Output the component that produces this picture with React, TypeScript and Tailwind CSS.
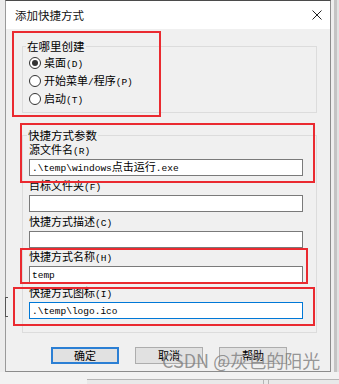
import React from "react";

const Mixed = ({ text }: { text: string }) => {
  const parts = text.split(/([\x00-\x7f]+)/).filter((p) => p.length > 0);
  return (
    <>
      {parts.map((p, i) =>
        /^[\x00-\x7f]+$/.test(p) ? (
          <span key={i} className="font-['Liberation_Mono',monospace] text-[9.5px]">
            {p}
          </span>
        ) : (
          <span key={i}>{p}</span>
        )
      )}
    </>
  );
};

const Radio = ({ checked, label }: { checked?: boolean; label: string }) => (
  <div className="h-[18px] flex items-center">
    <div className="ml-[3px] w-[12px] h-[12px] rounded-full border border-[#333333] bg-white flex items-center justify-center">
      {checked && <div className="w-[6px] h-[6px] rounded-full bg-[#333333]" />}
    </div>
    <div className="ml-[3px] leading-[14px]">
      <Mixed text={label} />
    </div>
  </div>
);

const Field = ({
  label,
  value,
  focused,
  first,
  short,
}: {
  label: string;
  value?: string;
  focused?: boolean;
  first?: boolean;
  short?: boolean;
}) => (
  <>
    <div className={`${first || short ? "h-[18px]" : "h-[19px]"} flex items-end ml-[2px]`}>
      <div className="leading-[14px]">
        <Mixed text={label} />
      </div>
    </div>
    <div
      className={`ml-[2px] w-[274px] h-[17px] bg-white border flex items-center pl-[2px] ${
        focused ? "border-[#0078d7]" : "border-[#7a7a7a]"
      }`}
    >
      <div className="leading-[13px] whitespace-nowrap">{value ? <Mixed text={value} /> : null}</div>
    </div>
  </>
);

export default function App() {
  return (
    <div className="relative w-[339px] h-[384px] overflow-hidden bg-[#e6e6e6] flex flex-col text-[11px] text-black font-['Noto_Sans_CJK_SC',sans-serif]">
      <div className="flex">
        <div className="w-[5px] bg-[#ececec]" />
        <div className="w-[326px] h-[372px] flex flex-col border-t border-t-[#4b4b4b] border-l border-r border-b border-l-[#9a9a9a] border-r-[#8c8c8c] border-b-[#8c8c8c]">
          <div className="h-[28px] bg-white flex items-center justify-between pl-[9px] pr-[7px]">
            <div className="text-[11.5px] leading-[14px] text-[#111]">添加快捷方式</div>
            <svg width="10" height="10" viewBox="0 0 10 10" className="mr-[1px]">
              <path d="M0.5 0.5 L9.5 9.5 M9.5 0.5 L0.5 9.5" stroke="#222" strokeWidth="1" fill="none" />
            </svg>
          </div>
          <div className="flex-1 bg-[#f0f0f0] flex flex-col">
            <fieldset className="mt-[10px] ml-[16px] w-[295px] border border-[#dcdcdc] pl-[3px] pt-[1px] pb-[4px]">
              <legend className="px-[1px] leading-[14px] text-[11.5px]">在哪里创建</legend>
              <Radio checked label="桌面(D)" />
              <Radio label="开始菜单/程序(P)" />
              <Radio label="启动(T)" />
            </fieldset>
            <fieldset className="mt-[16px] ml-[16px] w-[295px] border border-[#dcdcdc] pl-[4px] pb-[13px]">
              <legend className="px-[1px] leading-[12px] text-[11.5px]">快捷方式参数</legend>
              <Field first label="源文件名(R)" value=".\temp\windows点击运行.exe" />
              <Field label="目标文件夹(F)" />
              <Field label="快捷方式描述(C)" />
              <Field short label="快捷方式名称(H)" value="temp" />
              <Field label="快捷方式图标(I)" value=".\temp\logo.ico" focused />
            </fieldset>
            <div className="mt-[14px] ml-[45px] flex gap-[16px]">
              <div className="w-[68px] h-[17px] border-2 border-[#2b7fd4] bg-[#e1e1e1] flex items-center justify-center leading-[13px]">
                确定
              </div>
              <div className="w-[68px] h-[17px] border border-[#adadad] bg-[#e1e1e1] flex items-center justify-center leading-[13px]">
                取消
              </div>
              <div className="w-[68px] h-[17px] border border-[#adadad] bg-[#e1e1e1] flex items-center justify-center leading-[13px]">
                帮助
              </div>
            </div>
          </div>
        </div>
        <div className="flex-1 flex bg-[#e4e4e4]">
          <div className="w-[3px] bg-[#eeeeee]" />
          <div className="w-[3px] bg-[#c4c4c4]" />
          <div className="flex-1 bg-[#e2e2e2]" />
        </div>
      </div>
      <div className="flex-1 bg-[#f2f2f2] flex flex-col">
        <div className="h-[7px]" />
        <div className="flex-1 flex">
          <div className="w-[87px]" />
          <div className="flex-1 border-t border-[#b5b5b5] bg-[#e9e9e9] flex">
            <div className="w-[176px]" />
            <div className="w-[6px] border-l border-r border-[#b5b5b5]" />
          </div>
        </div>
      </div>

      {/* small bracket glitch on the left edge */}
      <div className="absolute left-[5px] top-[297px] w-[3px] h-[20px] border-l border-t border-b border-[#555]" />

      {/* red annotation boxes */}
      <div className="absolute left-[12px] top-[31px] w-[149px] h-[86px] border-2 border-[#ea2a30]" />
      <div className="absolute left-[20px] top-[123px] w-[295px] h-[60px] border-2 border-[#ea2a30]" />
      <div className="absolute left-[20px] top-[248px] w-[288px] h-[36px] border-2 border-[#ea2a30]" />
      <div className="absolute left-[13px] top-[287px] w-[302px] h-[39px] border-2 border-[#ea2a30]" />

      {/* watermark */}
      <div className="absolute left-[162px] top-[348px] text-[18px] leading-[24px] text-[#7d7d7d]/80 whitespace-nowrap">
        CSDN @灰色的阳光
      </div>
    </div>
  );
}
